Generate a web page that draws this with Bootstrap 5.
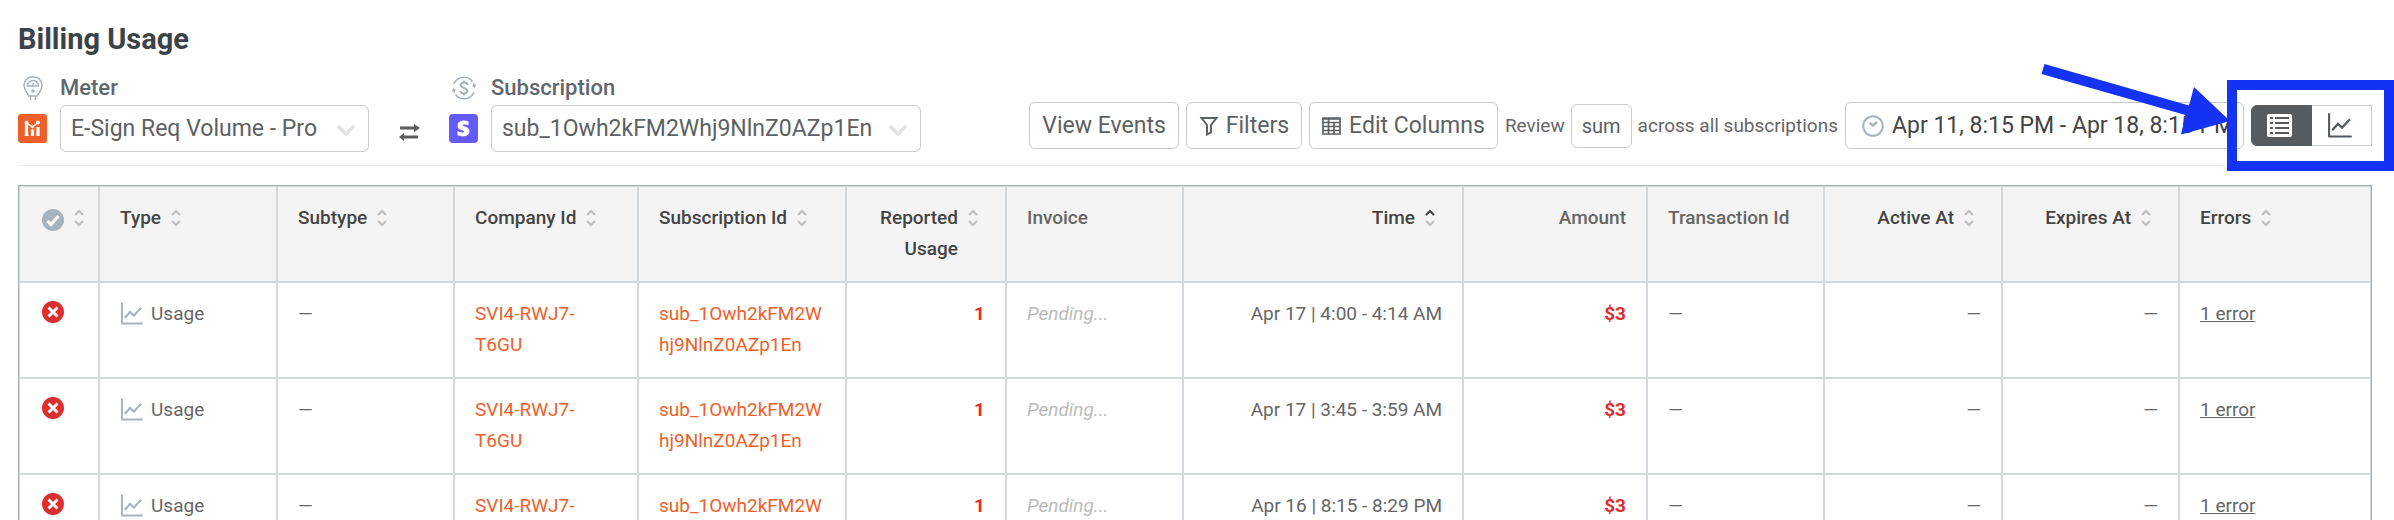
<!DOCTYPE html>
<html lang="en">
<head>
<meta charset="utf-8">
<meta name="viewport" content="width=device-width, initial-scale=1">
<title>Billing Usage</title>
<link href="https://cdn.jsdelivr.net/npm/bootstrap@5.3.0/dist/css/bootstrap.min.css" rel="stylesheet">
<style>
body{font-family:Roboto,"Liberation Sans",sans-serif;font-size:19px;line-height:31px;color:#666;background:#fff;overflow:hidden}
svg{display:block;flex:none}
.page{padding:20px 22px 0 18px}
.page-title{font-size:29px;line-height:38px;font-weight:700;color:#3b4348;margin:0 0 13px}
.toolbar{border-bottom:1px solid #ececec;padding-bottom:13px;margin-bottom:19px}
.field-grid{display:grid;grid-template-columns:30px auto;column-gap:12px}
.field-label{font-size:22px;line-height:34px;font-weight:500;color:#5f686e}
.muted-icon{color:#a9b3bb}
.picker,.tool{height:47px;border:1px solid #c8cbcc;border-radius:6px;font-size:23px;line-height:30px;color:#5c6163;background-color:#fff}
.picker{padding:0 40px 0 10px;background-position:right 12px center;background-size:20px 20px;background-image:url("data:image/svg+xml,%3Csvg xmlns='http://www.w3.org/2000/svg' viewBox='0 0 20 20'%3E%3Cpath d='M2 7l8 8 8-8' fill='none' stroke='%23e2e2e2' stroke-width='3.500'/%3E%3C/svg%3E")}
.picker-meter{width:309px}
.picker-sub{width:430px}
.tools{gap:7px;margin-bottom:3px}
.summary{gap:6px}
.tool{padding:0 12px}
.tool-sum{height:44px;font-size:20px;padding:0 10px}
.tool-date{color:#444;padding:0 16px;width:399px}
.swap{margin:0 29px 10px}
.view-switch .btn{width:61px;height:41px;padding:0 4px 0 0;border:1px solid #c8cbcc;border-radius:6px;color:#555b5e;background:#fff}
.view-switch .btn-check:checked + .btn{background:#555b5e;border-color:#555b5e;color:#fff}
.callout-box{position:absolute;inset:-25px -22px -25px -24px;border:10px solid #1433f5;pointer-events:none}
.callout-arrow{position:absolute;right:142px;top:-43px;pointer-events:none}
.usage-table{table-layout:fixed;border-collapse:separate;border-spacing:0;border:1px solid #a9b0b3;box-shadow:inset 1px 1px #d2d8dc;padding:1px 0 0 1px}
.usage-table th,.usage-table td{padding:15px 20px 17px;border:0 solid #d2d8dc;border-width:0 2px 2px 0;vertical-align:top;overflow-wrap:anywhere}
.usage-table th{background:#f4f4f4;font-weight:500;color:#444}
.usage-table th:last-child,.usage-table td:last-child{border-right-width:1px}
.usage-table th.plain{color:#666}
.usage-table th .sort{margin-top:7px}
.usage-table .sorter{gap:9px}
.usage-table .text-end .sort{margin-right:6px}
.usage-table .state{padding-left:22px;padding-right:10px}
.state .check-all{margin-top:7px}
.state .fail{margin-top:3px}
.sort.ascending{--up:#444}
.id-link{color:#f05f2a;text-decoration:none}
.bad{color:#e02d2d;font-weight:700}
.pending{color:#bbb;font-style:italic}
.err-link{color:#666}
</style>
</head>
<body>
<svg width="0" height="0" class="d-none">
<symbol id="sort" viewBox="0 0 12 18"><path d="M2 6l4-4 4 4" fill="none" stroke="var(--up,#bfbfbf)" stroke-width="2.2"/><path d="M2 12l4 4 4-4" fill="none" stroke="#bfbfbf" stroke-width="2.2"/></symbol>
<symbol id="chart" viewBox="0 0 24 24"><path d="M2 1v21.500h21" fill="none" stroke="currentColor" stroke-width="2" stroke-linecap="round" stroke-linejoin="round"/><path d="M5 16.500l5.500-6 4 3.500 7.500-8" fill="none" stroke="currentColor" stroke-width="2.200"/></symbol>
<symbol id="fail" viewBox="0 0 22 22"><circle cx="11" cy="11" r="11" fill="#e02d2d"/><path d="M6.500 6.500l9 9M15.500 6.500l-9 9" stroke="#fff" stroke-width="3"/></symbol>
</svg>
<main class="page">
<h1 class="page-title">Billing Usage</h1>
<div class="toolbar d-flex align-items-end justify-content-between">
  <div class="d-flex align-items-end">
    <div class="field-grid align-items-center">
      <svg class="muted-icon mx-auto" width="20" height="24" viewBox="0 0 20 24" fill="none" stroke="currentColor" stroke-width="1.500"><path d="M6 20C3 16 1 13 1 9a9 8.300 0 0 1 18 0c0 4-2 7-5 11z"/><path d="M4.500 10a5.500 5.500 0 0 1 11 0zM10 10V7M7.500 20v4M12.500 20v4"/><circle cx="10" cy="15" r="1"/></svg>
      <label class="field-label" for="meter">Meter</label>
      <svg width="29" height="29" viewBox="0 0 29 29"><rect width="29" height="29" rx="3" fill="#f05f2a"/><path d="M8.500 9v13M14.500 15.500V22M20 13v9" stroke="#fff" stroke-width="3.200"/><path d="M8 8.500l6.500 4.500 5.500-4.500" fill="none" stroke="#fff" stroke-width="1.400"/><g fill="#fff"><circle cx="8.500" cy="8.500" r="1.900"/><circle cx="14.500" cy="13" r="1.400"/><circle cx="20" cy="8.500" r="1.900"/><path d="M6.500 20.500h4V22h-4z"/></g></svg>
      <select id="meter" class="form-select picker picker-meter"><option>E-Sign Req Volume - Pro</option></select>
    </div>
    <svg class="swap" width="22" height="19" viewBox="0 0 22 19"><path d="M2 5h15M5 14h15" stroke="#5c5c5c" stroke-width="3"/><path d="M16 1l6 4-6 4zM6 10l-5 4 5 4z" fill="#5c5c5c"/></svg>
    <div class="field-grid align-items-center">
      <svg class="muted-icon mx-auto" width="24" height="24" viewBox="0 0 24 24" fill="none" stroke="currentColor" stroke-width="1.600"><path d="M2 8A10.700 10.700 0 0 1 20.500 5.500M22 16A10.700 10.700 0 0 1 3.500 18.500M1.300 13a10.700 10.700 0 0 0 1.200 4M22.700 11a10.700 10.700 0 0 0-1.200-4"/><path d="M20 9l4-.5-1.500 4zM4 15l-4 .5L1.500 11.500z" fill="currentColor" stroke="none"/><path d="M15.500 9c0-3.300-7-3.300-7 0 0 3.400 7 2.600 7 6s-7 3.300-7 0M12 4.500v2M12 17.500v2" stroke-width="1.900"/></svg>
      <label class="field-label" for="sub">Subscription</label>
      <svg width="29" height="29" viewBox="0 0 29 29"><rect width="29" height="29" rx="4" fill="#635bff"/><path d="M19.500 7.500v4c-2.500-1.200-5.500-1.400-5.500-.2 0 1.600 6.500 1 6.500 6 0 5.200-7 6.200-12 4v-4.200c3 1.700 6.500 1.800 6.500.4 0-1.900-6.500-1-6.500-5.800 0-5 6.500-6.200 11-4.200z" fill="#fff"/></svg>
      <select id="sub" class="form-select picker picker-sub"><option>sub_1Owh2kFM2Whj9NlnZ0AZp1En</option></select>
    </div>
  </div>
  <div class="d-flex align-items-center tools">
    <button class="btn tool" type="button">View Events</button>
    <button class="btn tool d-flex align-items-center gap-2" type="button"><svg width="19" height="20" viewBox="0 0 19 20"><path d="M2.500 2h15L12 9v7.500l-4 2V9z" fill="none" stroke="currentColor" stroke-width="2"/></svg>Filters</button>
    <button class="btn tool d-flex align-items-center gap-2" type="button"><svg width="19" height="18" viewBox="0 0 19 18"><path d="M1 1h17v16H1zM1 2h17M1 5.500h17M1 9.500h17M1 13.500h17M6.500 1v16M12 5v12" fill="none" stroke="currentColor" stroke-width="1.700"/></svg>Edit Columns</button>
    <div class="summary d-flex align-items-center text-nowrap"><span>Review</span>
    <button class="btn tool tool-sum" type="button">sum</button>
    <span>across all subscriptions</span></div>
    <button class="btn tool tool-date d-flex align-items-center gap-2 text-nowrap" type="button"><svg width="22" height="22" viewBox="0 0 22 22" fill="none" stroke="#a9b3bb" stroke-width="2"><circle cx="11" cy="11" r="9.800"/><path d="M7.500 8l3.500 2.500L15 7" stroke-width="2.500"/></svg>Apr 11, 8:15 PM - Apr 18, 8:15 PM</button>
    <div class="view-switch btn-group position-relative" role="group" aria-label="View">
      <input class="btn-check" type="radio" name="view" id="v-table" checked>
      <label class="btn d-flex align-items-center justify-content-center" for="v-table" aria-label="Table"><svg width="25" height="23" viewBox="0 0 25 23"><rect width="25" height="23" rx="2" fill="#fff"/><path d="M8 4h14M8 9h14M8 14h14M8 19h14M3 4h3M3 9h3M3 14h3M3 19h3" stroke="#555b5e" stroke-width="2"/></svg></label>
      <input class="btn-check" type="radio" name="view" id="v-chart">
      <label class="btn d-flex align-items-center justify-content-center" for="v-chart" aria-label="Chart"><svg width="25" height="25"><use href="#chart"/></svg></label>
      <svg class="callout-arrow" width="192" height="76" viewBox="0 0 192 76"><path d="M6.500 2L151 43.500l5-18.500L192 59l-49 13.500 4.500-19.500L3.500 12z" fill="#1433f5"/></svg>
      <div class="callout-box"></div>
    </div>
  </div>
</div>
<table class="usage-table w-100">
<colgroup><col style="width:80px"><col style="width:178px"><col style="width:177px"><col style="width:184px"><col style="width:208px"><col style="width:160px"><col style="width:177px"><col style="width:280px"><col style="width:184px"><col style="width:177px"><col style="width:178px"><col style="width:177px"><col></colgroup>
<thead><tr id="head"></tr></thead>
<tbody id="rows"></tbody>
</table>
</main>
<script>
const columns = [["Type",1,0],["Subtype",1,0],["Company Id",1,0],["Subscription Id",1,0],["Reported Usage",1,1],["Invoice",0,0],["Time",1,1],["Amount",0,1],["Transaction Id",0,0],["Active At",1,1],["Expires At",1,1],["Errors",1,0]];
const sortIcon = t => `<svg class="sort${t === "Time" ? " ascending" : ""}" width="12" height="18"><use href="#sort"/></svg>`;
document.getElementById("head").innerHTML =
  `<th class="state" scope="col" aria-label="Status"><div class="d-flex sorter"><svg class="check-all" width="22" height="22" viewBox="0 0 22 22"><circle cx="11" cy="11" r="11" fill="#a9b3bb"/><path d="M5.500 12l3.500 3.500L16.500 7" fill="none" stroke="#fff" stroke-width="3"/></svg>${sortIcon("")}</div></th>` +
  columns.map(([t, s, r]) => `<th scope="col" class="${s ? "" : "plain"}"><div class="d-flex sorter ${r ? "justify-content-end text-end" : ""}"><span>${t}</span>${s ? sortIcon(t) : ""}</div></th>`).join("");
document.getElementById("rows").innerHTML = ["Apr 17 | 4:00 - 4:14 AM", "Apr 17 | 3:45 - 3:59 AM", "Apr 16 | 8:15 - 8:29 PM"].map(t => `<tr>
<td class="state"><svg class="fail" width="22" height="22" role="img" aria-label="Failed"><use href="#fail"/></svg></td>
<td><div class="d-flex align-items-center gap-2"><svg class="muted-icon" width="23" height="23"><use href="#chart"/></svg>Usage</div></td>
<td>—</td><td><a class="id-link" href="#">SVI4-RWJ7-T6GU</a></td><td><a class="id-link" href="#">sub_1Owh2kFM2Whj9NlnZ0AZp1En</a></td>
<td class="text-end bad">1</td><td class="pending">Pending...</td><td class="text-end">${t}</td><td class="text-end bad">$3</td>
<td>—</td><td class="text-end">—</td><td class="text-end">—</td><td><a class="err-link" href="#">1 error</a></td></tr>`).join("");
</script>
<script src="https://cdn.jsdelivr.net/npm/bootstrap@5.3.0/dist/js/bootstrap.bundle.min.js"></script>
</body>
</html>
